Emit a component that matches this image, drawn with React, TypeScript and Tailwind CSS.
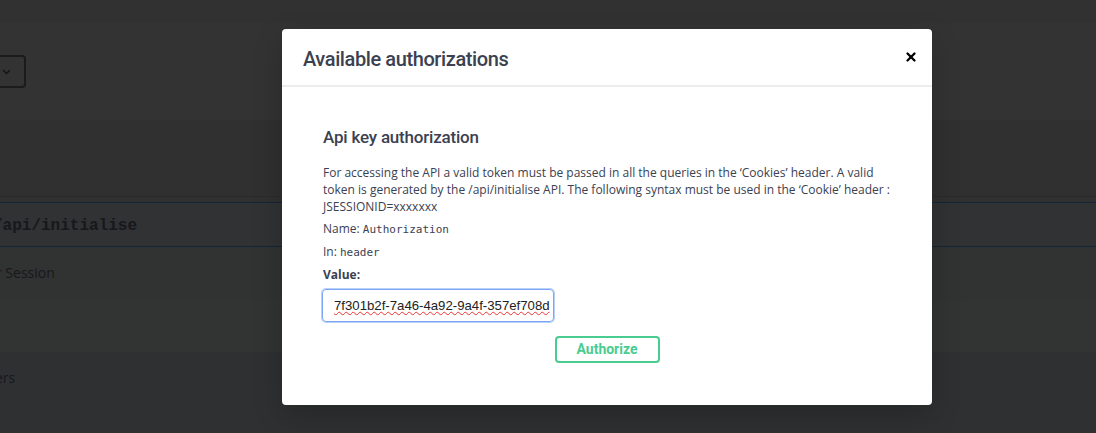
import { X } from "lucide-react";

const SANS = "font-['Open_Sans',sans-serif]";

function Background() {
  return (
    <div className="flex flex-col w-full h-[433px] overflow-hidden bg-[#2f3031]">
      <div className="h-[23px] bg-[#313131]" />
      <div className="h-[97px] bg-[#333333] flex items-start pt-[32px]">
        <div className="-ml-[8px] w-[34px] h-[33px] rounded-[4px] border-2 border-[#1b1b1b] flex items-center pl-[8px]">
          <svg width="9" height="6" viewBox="0 0 9 6">
            <path d="M1 1l3.5 3.5L8 1" stroke="#151515" strokeWidth="1.5" fill="none" />
          </svg>
        </div>
      </div>
      <div className="h-[77px] bg-[#303030] border-b border-[#2a2a2a]" />
      <div className="h-[5px] bg-[#303030]" />
      <div className="h-[45px] bg-[#303233] border-y border-[#132538] flex items-center">
        <span className="-ml-[7px] mt-[2px] font-['Liberation_Mono',monospace] font-bold text-[16px] text-[#17181b]">
          /api/initialise
        </span>
      </div>
      <div className={`h-[53px] bg-[#313232] flex items-center pb-[2px] ${SANS}`}>
        <span className="-ml-[4px] text-[14px] text-[#17181b]">r Session</span>
      </div>
      <div className="h-[52px] bg-[#323333]" />
      <div className={`h-[80px] bg-[#2f3031] pt-[15px] ${SANS}`}>
        <span className="block -ml-[5px] text-[14px] text-[#17181b]">ers</span>
      </div>
    </div>
  );
}

function AuthModal() {
  return (
    <div className="absolute left-[282px] top-[29px] w-[650px] h-[376px] bg-white rounded-[4px] shadow-[0_10px_30px_rgba(0,0,0,0.2)] flex flex-col">
      <div className="h-[58px] flex items-center justify-between pl-[21px] pr-[14px] pt-[4px] border-b-2 border-[#ededed]">
        <h3 className="font-['Roboto',sans-serif] font-medium text-[20px] tracking-[-0.4px] text-[#3b4151]">
          Available authorizations
        </h3>
        <X size={14} strokeWidth={4} className="text-black -mt-[4px]" />
      </div>
      <div className={`flex flex-col px-[41px] pt-[39px] ${SANS} text-[#3b4151]`}>
        <h4 className="font-['Roboto',sans-serif] font-medium text-[17px] leading-[22px] tracking-[-0.2px]">
          Api key authorization
        </h4>
        <p className="mt-[16px] text-[12px] leading-[17px]">
          For accessing the API a valid token must be passed in all the queries in the ‘Cookies’ header. A valid
          token is generated by the /api/initialise API. The following syntax must be used in the ‘Cookie’ header :
          JSESSIONID=xxxxxxx
        </p>
        <p className="mt-[5px] text-[12px] leading-[17px]">
          Name: <code className="font-['DejaVu_Sans_Mono',monospace] text-[11px]">Authorization</code>
        </p>
        <p className="mt-[5px] text-[12px] leading-[17px]">
          In: <code className="font-['DejaVu_Sans_Mono',monospace] text-[11px]">header</code>
        </p>
        <label className="mt-[5px] text-[12px] leading-[17px] font-bold">Value:</label>
        <div className="mt-[6px] -ml-[1px] w-[232px] h-[33px] pl-[11px] rounded-[4px] border border-[#7aa6f2] shadow-[0_0_0_1px_#b9d0fa] flex items-center overflow-hidden">
          <span className="font-['Liberation_Sans',sans-serif] text-[13.2px] text-[#222] whitespace-nowrap underline decoration-wavy decoration-[#e33] decoration-1 underline-offset-[1px]">
            7f301b2f-7a46-4a92-9a4f-357ef708d
          </span>
        </div>
        <div className="flex justify-center mt-[14px]">
          <button className="w-[105px] h-[27px] rounded-[4px] border-2 border-[#49cc90] text-[#49cc90] font-['Roboto',sans-serif] font-bold text-[14px]">
            Authorize
          </button>
        </div>
      </div>
    </div>
  );
}

export default function App() {
  return (
    <div className="relative w-[1096px] h-[433px] overflow-hidden">
      <Background />
      <AuthModal />
    </div>
  );
}
